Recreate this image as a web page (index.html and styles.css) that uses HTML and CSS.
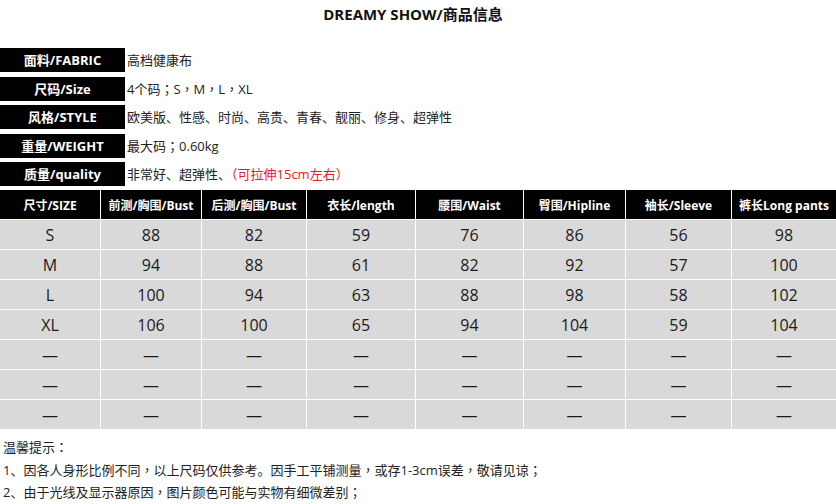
FILE: index.html
```html
<!DOCTYPE html>
<html lang="zh-CN">
<head>
<meta charset="utf-8">
<title>DREAMY SHOW/商品信息</title>
<link rel="stylesheet" href="styles.css">
</head>
<body>
<div class="page">
  <h1 class="title">DREAMY SHOW/商品信息</h1>

  <div class="info">
    <div class="info-row"><div class="info-label">面料/FABRIC</div><div class="info-value">高档健康布</div></div>
    <div class="info-row"><div class="info-label">尺码/Size</div><div class="info-value">4个码<span class="p" lang="zh-TW">；</span>S<span class="p" lang="zh-TW">，</span>M<span class="p" lang="zh-TW">，</span>L<span class="p" lang="zh-TW">，</span>XL</div></div>
    <div class="info-row"><div class="info-label">风格/STYLE</div><div class="info-value">欧美版、性感、时尚、高贵、青春、靓丽、修身、超弹性</div></div>
    <div class="info-row"><div class="info-label">重量/WEIGHT</div><div class="info-value">最大码<span class="p" lang="zh-TW">；</span>0.60kg</div></div>
    <div class="info-row"><div class="info-label">质量/quality</div><div class="info-value">非常好、超弹性、<span class="red">（可拉伸15cm左右）</span></div></div>
  </div>

  <div class="size-table">
    <div class="th">尺寸/SIZE</div>
    <div class="th">前测/胸围/Bust</div>
    <div class="th">后测/胸围/Bust</div>
    <div class="th">衣长/length</div>
    <div class="th">腰围/Waist</div>
    <div class="th">臀围/Hipline</div>
    <div class="th">袖长/Sleeve</div>
    <div class="th">裤长Long pants</div>

    <div class="td">S</div><div class="td">88</div><div class="td">82</div><div class="td">59</div><div class="td">76</div><div class="td">86</div><div class="td">56</div><div class="td">98</div>
    <div class="td">M</div><div class="td">94</div><div class="td">88</div><div class="td">61</div><div class="td">82</div><div class="td">92</div><div class="td">57</div><div class="td">100</div>
    <div class="td">L</div><div class="td">100</div><div class="td">94</div><div class="td">63</div><div class="td">88</div><div class="td">98</div><div class="td">58</div><div class="td">102</div>
    <div class="td">XL</div><div class="td">106</div><div class="td">100</div><div class="td">65</div><div class="td">94</div><div class="td">104</div><div class="td">59</div><div class="td">104</div>
    <div class="td">—</div><div class="td">—</div><div class="td">—</div><div class="td">—</div><div class="td">—</div><div class="td">—</div><div class="td">—</div><div class="td">—</div>
    <div class="td">—</div><div class="td">—</div><div class="td">—</div><div class="td">—</div><div class="td">—</div><div class="td">—</div><div class="td">—</div><div class="td">—</div>
    <div class="td">—</div><div class="td">—</div><div class="td">—</div><div class="td">—</div><div class="td">—</div><div class="td">—</div><div class="td">—</div><div class="td">—</div>
  </div>

  <div class="notes">
    <p>温馨提示<span class="p" lang="zh-TW">：</span></p>
    <p>1、因各人身形比例不同<span class="p" lang="zh-TW">，</span>以上尺码仅供参考。因手工平铺测量<span class="p" lang="zh-TW">，</span>或存1-3cm误差<span class="p" lang="zh-TW">，</span>敬请见谅<span class="p" lang="zh-TW">；</span></p>
    <p>2、由于光线及显示器原因<span class="p" lang="zh-TW">，</span>图片颜色可能与实物有细微差别<span class="p" lang="zh-TW">；</span></p>
  </div>
</div>
</body>
</html>
```

FILE: styles.css
```css
* { box-sizing: border-box; }

html, body {
  margin: 0;
  padding: 0;
  background: #fff;
}

body {
  font-family: "Open Sans", "Noto Sans CJK SC", sans-serif;
  color: #222;
  width: 836px;
  height: 504px;
  overflow: hidden;
}

.page {
  display: flex;
  flex-direction: column;
}

.p {
  font-family: "Noto Sans CJK TC", sans-serif;
}

.title {
  margin: 0;
  height: 48px;
  padding: 4px 10px 0 0;
  font-size: 15px;
  line-height: 20px;
  font-weight: 700;
  text-align: center;
  color: #111;
}

.info {
  display: flex;
  flex-direction: column;
  gap: 4.5px;
}

.info-row {
  display: flex;
  align-items: center;
  height: 24px;
}

.info-label {
  width: 125px;
  height: 24px;
  background: #000;
  color: #fff;
  font-size: 13px;
  font-weight: 700;
  line-height: 24px;
  text-align: center;
  flex: none;
}

.info-value {
  padding-left: 2px;
  font-size: 13px;
  line-height: 24px;
  color: #222;
  white-space: nowrap;
}

.red { color: #e8191f; }

.size-table {
  margin-top: 4px;
  display: grid;
  grid-template-columns: 100px 100px 104px 108px 107px 101px 105px 104px;
  grid-auto-rows: 29px;
  gap: 1px;
  background: #fff;
}

.th {
  background: #000;
  color: #fff;
  font-size: 12px;
  font-weight: 700;
  display: flex;
  align-items: center;
  justify-content: center;
  white-space: nowrap;
}

.td {
  background: #d9d9d9;
  color: #1a1a1a;
  font-size: 16px;
  display: flex;
  align-items: center;
  justify-content: center;
}

.notes {
  margin-top: 7px;
  padding-left: 3px;
  font-size: 13px;
  color: #222;
}

.notes p {
  margin: 0;
  line-height: 22.5px;
  white-space: nowrap;
}
```
